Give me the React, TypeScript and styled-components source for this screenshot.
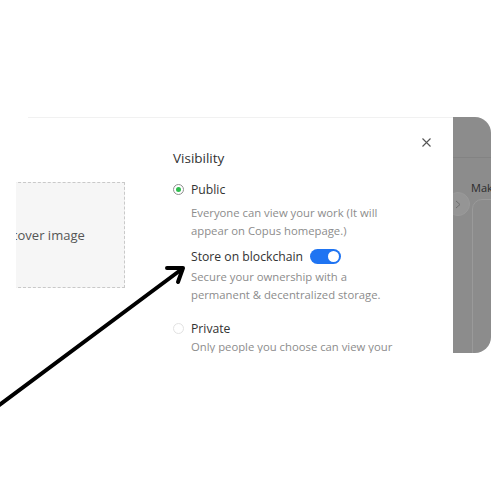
import React from "react";
import styled, { createGlobalStyle } from "styled-components";

const Global = createGlobalStyle`
  html, body { margin: 0; padding: 0; background: #ffffff; }
  body { font-family: "Open Sans", "Liberation Sans", sans-serif; }
  #root { width: 500px; height: 500px; position: relative; overflow: hidden; }
`;

const Page = styled.div`
  width: 500px;
  height: 500px;
  padding-top: 117px;
  box-sizing: border-box;
`;

const Frame = styled.div`
  display: flex;
  width: 491px;
  height: 236px;
`;

const Panel = styled.div`
  position: relative;
  z-index: 1;
  width: 453px;
  height: 100%;
  background: #ffffff;
  display: flex;
  overflow: hidden;
  &::before {
    content: "";
    position: absolute;
    left: 28px;
    right: 0;
    top: 0;
    height: 1px;
    background: #f1f1f1;
  }
`;

const LeftCol = styled.div`
  width: 173px;
  padding: 65px 0 0 16px;
  box-sizing: border-box;
  flex-shrink: 0;
`;

const CoverClip = styled.div`
  width: 109px;
  height: 106px;
  overflow: hidden;
`;

const CoverBox = styled.div`
  width: 201px;
  height: 106px;
  margin-left: -92px;
  box-sizing: border-box;
  border: 1px dashed #c9c9c9;
  background: #f6f6f6;
  display: flex;
  align-items: center;
  justify-content: center;
  font-size: 13px;
  color: #555;
`;

const Main = styled.div`
  flex: 1;
  display: flex;
`;

const Content = styled.div`
  flex: 1;
  padding-top: 31px;
`;

const Title = styled.div`
  font-size: 13.5px;
  line-height: 20px;
  font-weight: 500;
  color: #333;
  margin-bottom: 11px;
`;

const OptionRow = styled.div<{ $mt?: number }>`
  display: flex;
  align-items: center;
  gap: 7px;
  height: 20px;
  margin-top: ${(p) => p.$mt ?? 0}px;
`;

const Radio = styled.span<{ $checked?: boolean }>`
  width: 11px;
  height: 11px;
  border-radius: 50%;
  box-sizing: border-box;
  border: 1px solid ${(p) => (p.$checked ? "#8f8f8f" : "#e2e2e2")};
  display: flex;
  align-items: center;
  justify-content: center;
  flex-shrink: 0;
  &::after {
    content: "";
    width: 5px;
    height: 5px;
    border-radius: 50%;
    background: ${(p) => (p.$checked ? "#2ebd4e" : "transparent")};
  }
`;

const Label = styled.span`
  font-size: 12.2px;
  color: #333;
`;

const SubRow = styled.div<{ $mt?: number }>`
  display: flex;
  align-items: center;
  gap: 7px;
  height: 20px;
  padding-left: 18px;
  margin-top: ${(p) => p.$mt ?? 0}px;
`;

const Desc = styled.div<{ $mt?: number }>`
  padding-left: 18px;
  font-size: 11.3px;
  line-height: 18px;
  color: #8c8c8c;
  margin-top: ${(p) => p.$mt ?? 0}px;
`;

const Toggle = styled.span<{ $on?: boolean }>`
  width: 31px;
  height: 15px;
  border-radius: 8px;
  background: ${(p) => (p.$on ? "#1f74f2" : "#ccc")};
  display: flex;
  align-items: center;
  justify-content: ${(p) => (p.$on ? "flex-end" : "flex-start")};
  padding: 0 2px;
  box-sizing: border-box;
  &::after {
    content: "";
    width: 11px;
    height: 11px;
    border-radius: 50%;
    background: #fff;
  }
`;

const CloseButton = styled.button`
  margin: 19px 21px 0 0;
  width: 12px;
  height: 12px;
  padding: 0;
  border: none;
  background: none;
  display: flex;
  align-items: center;
  justify-content: center;
  color: #555;
`;

const Backdrop = styled.div`
  width: 38px;
  height: 100%;
  background: #8c8c8c;
  border-radius: 0 16px 16px 0;
  overflow: hidden;
  display: flex;
  flex-direction: column;
`;

const BackdropTop = styled.div`
  height: 40px;
  border-bottom: 1px solid #838383;
  flex-shrink: 0;
`;

const BackdropBody = styled.div`
  display: flex;
  flex-direction: column;
  padding-left: 18px;
  padding-top: 23px;
  position: relative;
`;

const Mak = styled.div`
  font-size: 11px;
  line-height: 14px;
  color: #2b2b2b;
  white-space: nowrap;
`;

const NavCircle = styled.div`
  position: absolute;
  left: -7px;
  top: 34px;
  width: 24px;
  height: 24px;
  border-radius: 50%;
  background: #959595;
  border: 1px solid #9a9a9a;
  display: flex;
  align-items: center;
  justify-content: flex-end;
  padding-right: 8px;
  box-sizing: border-box;
  color: #6f6f6f;
`;

const CardOutline = styled.div`
  margin-top: 4px;
  margin-left: 1px;
  width: 60px;
  height: 200px;
  border: 1px solid #9a9a9a;
  border-radius: 10px;
`;

const ArrowLayer = styled.svg`
  position: absolute;
  left: 0;
  top: 0;
  pointer-events: none;
  z-index: 5;
`;

export default function App() {
  return (
    <>
      <Global />
      <Page>
        <Frame>
          <Panel>
            <LeftCol>
              <CoverClip>
                <CoverBox>Upload cover image</CoverBox>
              </CoverClip>
            </LeftCol>
            <Main>
              <Content>
                <Title>Visibility</Title>
                <OptionRow>
                  <Radio $checked />
                  <Label>Public</Label>
                </OptionRow>
                <Desc $mt={5}>
                  Everyone can view your work (It will
                  <br />
                  appear on Copus homepage.)
                </Desc>
                <SubRow $mt={6}>
                  <Label>Store on blockchain</Label>
                  <Toggle $on />
                </SubRow>
                <Desc $mt={2}>
                  Secure your ownership with a
                  <br />
                  permanent &amp; decentralized storage.
                </Desc>
                <OptionRow $mt={14}>
                  <Radio />
                  <Label>Private</Label>
                </OptionRow>
                <Desc>Only people you choose can view your</Desc>
              </Content>
              <CloseButton aria-label="Close">
                <svg width="9" height="9" viewBox="0 0 9 9">
                  <path d="M0.5 0.5 L8.5 8.5 M8.5 0.5 L0.5 8.5" stroke="currentColor" strokeWidth="1.1" />
                </svg>
              </CloseButton>
            </Main>
          </Panel>
          <Backdrop>
            <BackdropTop />
            <BackdropBody>
              <Mak>Make</Mak>
              <NavCircle>
                <svg width="6" height="9" viewBox="0 0 6 9">
                  <path d="M1 1 L5 4.5 L1 8" stroke="currentColor" strokeWidth="1" fill="none" />
                </svg>
              </NavCircle>
              <CardOutline />
            </BackdropBody>
          </Backdrop>
        </Frame>
      </Page>
      <ArrowLayer width="500" height="500" viewBox="0 0 500 500">
        <path d="M-2 406 L182 269" stroke="#000" strokeWidth="4" strokeLinecap="round" fill="none" />
        <path d="M167 268 L183 268 L178 282" stroke="#000" strokeWidth="4" strokeLinecap="round" strokeLinejoin="round" fill="none" />
      </ArrowLayer>
    </>
  );
}
